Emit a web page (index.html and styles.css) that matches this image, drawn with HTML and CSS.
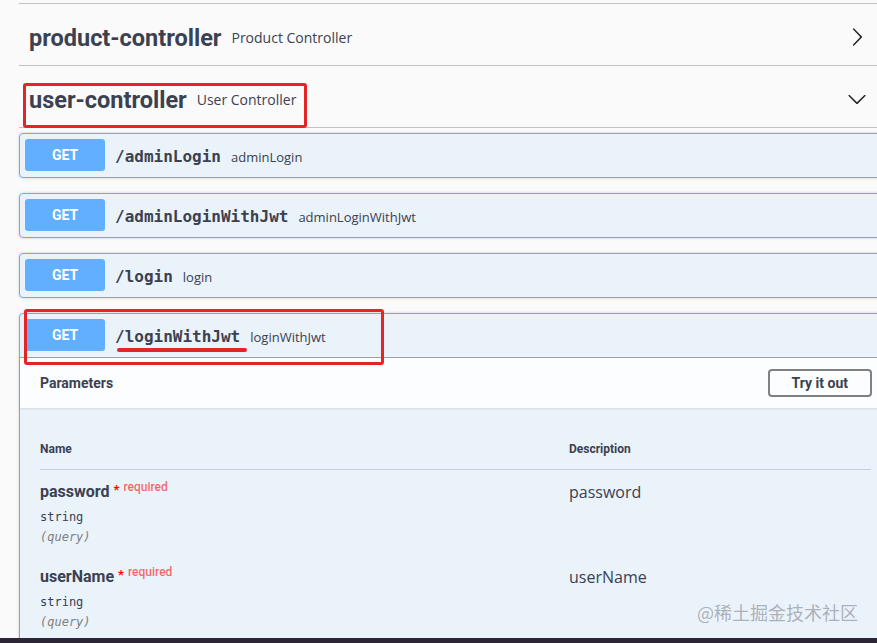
FILE: index.html
```html
<!DOCTYPE html>
<html lang="en">
<head>
<meta charset="utf-8">
<title>Swagger UI</title>
<link rel="stylesheet" href="styles.css">
</head>
<body>
<div class="page">
  <div class="viewport">
    <div class="wrapper">
      <div class="prev-tag"></div>

      <h3 class="tag-header">
        <span class="tag-name">product-controller</span>
        <span class="tag-desc">Product Controller</span>
        <svg class="chev" viewBox="0 0 20 20" width="20" height="20"><path d="M13.25 10L6.109 2.58a.697.697 0 0 1 0-.979.68.68 0 0 1 .969 0l7.83 7.908a.697.697 0 0 1 0 .979l-7.83 7.908a.68.68 0 0 1-.969 0 .697.697 0 0 1 0-.979L13.25 10z"/></svg>
      </h3>

      <h3 class="tag-header">
        <span class="tag-name">user-controller</span>
        <span class="tag-desc">User Controller</span>
        <svg class="chev" viewBox="0 0 20 20" width="20" height="20"><path d="M17.418 6.109c.272-.268.709-.268.979 0s.271.701 0 .969l-7.908 7.83c-.27.268-.707.268-.979 0l-7.908-7.830c-.27-.268-.27-.701 0-.969.271-.268.709-.268.979 0L10 13.25l7.418-7.141z"/></svg>
      </h3>

      <div class="opblock">
        <div class="summary">
          <span class="method">GET</span>
          <span class="path">/adminLogin</span>
          <span class="summary-desc">adminLogin</span>
        </div>
      </div>

      <div class="opblock">
        <div class="summary">
          <span class="method">GET</span>
          <span class="path">/adminLoginWithJwt</span>
          <span class="summary-desc">adminLoginWithJwt</span>
        </div>
      </div>

      <div class="opblock">
        <div class="summary">
          <span class="method">GET</span>
          <span class="path">/login</span>
          <span class="summary-desc">login</span>
        </div>
      </div>

      <div class="opblock opblock-open">
        <div class="summary summary-open">
          <span class="method">GET</span>
          <span class="path">/loginWithJwt</span>
          <span class="summary-desc">loginWithJwt</span>
        </div>
        <div class="params-header">
          <h4 class="params-title">Parameters</h4>
          <button class="try-btn">Try it out</button>
        </div>
        <div class="table">
          <div class="thead">
            <div class="th">Name</div>
            <div class="th">Description</div>
          </div>
          <div class="row">
            <div class="col-name">
              <div class="param-name">password<span class="star">*</span><span class="req">required</span></div>
              <div class="param-type">string</div>
              <div class="param-in">(query)</div>
            </div>
            <div class="col-desc">password</div>
          </div>
          <div class="row">
            <div class="col-name">
              <div class="param-name">userName<span class="star">*</span><span class="req">required</span></div>
              <div class="param-type">string</div>
              <div class="param-in">(query)</div>
            </div>
            <div class="col-desc">userName</div>
          </div>
        </div>
      </div>
    </div>

    <div class="mark mark-tag"></div>
    <div class="mark mark-op"></div>
    <div class="mark-line"></div>
    <div class="watermark">@稀土掘金技术社区</div>
  </div>
  <div class="taskbar"></div>
</div>
</body>
</html>
```

FILE: styles.css
```css
html, body {
  margin: 0;
  padding: 0;
  background: #fafafa;
}

.page {
  width: 877px;
  height: 643px;
  display: flex;
  flex-direction: column;
  overflow: hidden;
  color: #3b4151;
  font-family: Roboto, "Noto Sans", sans-serif;
}

.viewport {
  flex: 1;
  position: relative;
  overflow: hidden;
}

.wrapper {
  width: 873px;
  padding-left: 19px;
}

.prev-tag {
  height: 3px;
  border-bottom: 1px solid rgba(59, 65, 81, 0.3);
  margin-bottom: 5px;
}

.tag-header {
  margin: 0 0 5px;
  height: 56px;
  display: flex;
  align-items: center;
  padding: 0 25px 0 10px;
  border-bottom: 1px solid rgba(59, 65, 81, 0.3);
}

.tag-name {
  font-family: Roboto, sans-serif;
  font-weight: 700;
  font-size: 23.5px;
  color: #3b4151;
  padding-top: 2px;
}

.tag-desc {
  flex: 1;
  margin-left: 10px;
  font-family: "Open Sans", sans-serif;
  font-weight: 400;
  font-size: 14px;
  color: #3b4151;
}

.chev {
  display: block;
  fill: #1f1f1f;
}

.opblock {
  margin-bottom: 15px;
  border: 1px solid #61affe;
  border-radius: 4px;
  background: rgba(97, 175, 254, 0.1);
  box-shadow: 0 0 3px rgba(0, 0, 0, 0.19);
}

.summary {
  display: flex;
  align-items: center;
  padding: 5px 5px 6px;
}

.summary-open {
  border-bottom: 1px solid #61affe;
}

.method {
  min-width: 80px;
  box-sizing: border-box;
  padding: 6px 0;
  line-height: 20px;
  text-align: center;
  font-family: Roboto, sans-serif;
  font-weight: 700;
  font-size: 14px;
  color: #fff;
  background: #61affe;
  border-radius: 3px;
}

.path {
  padding: 2px 10px 0;
  font-family: "DejaVu Sans Mono", "Liberation Mono", monospace;
  font-weight: 700;
  font-size: 16px;
  color: #3b4151;
}

.summary-desc {
  padding-top: 3px;
  font-family: "Open Sans", sans-serif;
  font-size: 13px;
  color: #3b4151;
}

.params-header {
  min-height: 50px;
  box-sizing: border-box;
  padding: 8px 20px;
  display: flex;
  align-items: center;
  justify-content: space-between;
  background: rgba(255, 255, 255, 0.8);
  box-shadow: 0 1px 2px rgba(0, 0, 0, 0.1);
}

.params-title {
  margin: 0;
  font-family: Roboto, sans-serif;
  font-weight: 700;
  font-size: 14px;
  color: #3b4151;
}

.try-btn {
  height: 28px;
  padding: 0 22px;
  margin-right: -1px;
  border: 2px solid #808080;
  border-radius: 4px;
  background: transparent;
  font-family: Roboto, sans-serif;
  font-weight: 700;
  font-size: 14px;
  color: #3b4151;
}

.table {
  padding: 20px;
}

.thead {
  display: grid;
  grid-template-columns: 529px 1fr;
  border-bottom: 1px solid rgba(59, 65, 81, 0.2);
}

.th {
  padding: 13px 0 11px;
  font-family: Roboto, sans-serif;
  font-weight: 700;
  font-size: 12px;
  line-height: 17px;
  color: #3b4151;
}

.row {
  display: grid;
  grid-template-columns: 529px 1fr;
  padding: 10px 0 10px;
}

.param-name {
  font-family: Roboto, sans-serif;
  font-weight: 700;
  font-size: 16px;
  line-height: 24px;
  color: #3b4151;
}

.star {
  position: relative;
  top: -3px;
  margin-left: 4px;
  font-size: 13px;
  color: #ff0000;
}

.req {
  position: relative;
  top: -6px;
  padding-left: 4px;
  font-family: Roboto, sans-serif;
  font-weight: 500;
  font-size: 12px;
  color: rgba(255, 0, 0, 0.6);
}

.param-type {
  padding-top: 4px;
  font-family: "DejaVu Sans Mono", "Liberation Mono", monospace;
  font-size: 12px;
  line-height: 16px;
  color: #3b4151;
}

.param-in {
  margin-top: 4px;
  font-family: "DejaVu Sans Mono", "Liberation Mono", monospace;
  font-style: italic;
  font-size: 12px;
  line-height: 16px;
  color: #808080;
}

.col-desc {
  font-family: "Open Sans", sans-serif;
  font-size: 16px;
  line-height: 24px;
  color: #3b4151;
}

/* annotation overlays */
.mark {
  position: absolute;
  box-sizing: border-box;
  border: 3px solid #e52429;
  border-radius: 3px;
}

.mark-tag {
  left: 23px;
  top: 83px;
  width: 284px;
  height: 45px;
}

.mark-op {
  left: 24px;
  top: 309px;
  width: 360px;
  height: 56px;
}

.mark-line {
  position: absolute;
  left: 117px;
  top: 348px;
  width: 130px;
  height: 4px;
  border-radius: 2px;
  background: #e52429;
}

.watermark {
  position: absolute;
  left: 697px;
  top: 600px;
  font-family: "Noto Sans CJK SC", sans-serif;
  font-size: 18px;
  line-height: 24px;
  color: rgba(150, 155, 165, 0.75);
}

.taskbar {
  height: 5px;
  background: #2b2536;
}
```
